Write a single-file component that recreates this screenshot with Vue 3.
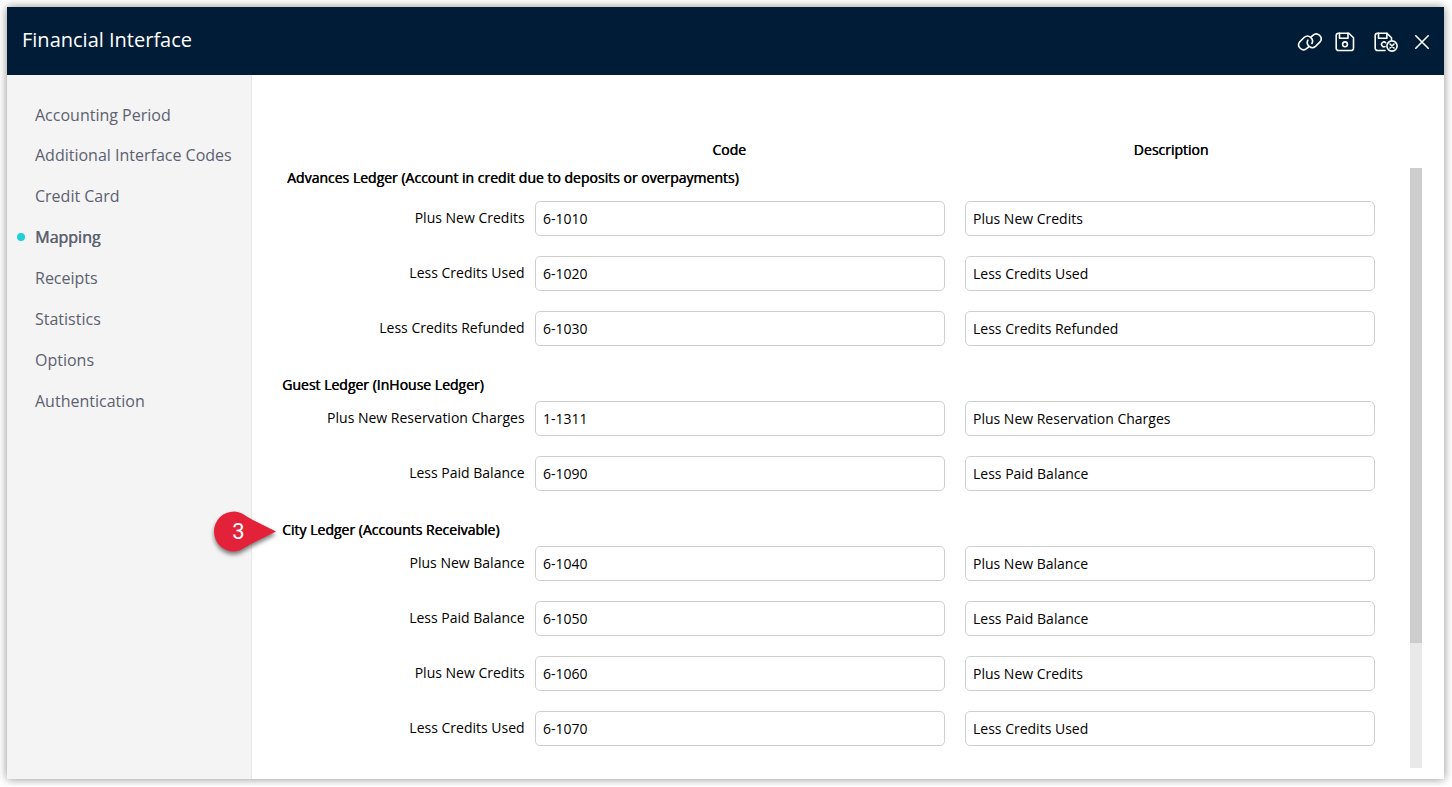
<script setup>
import { ref } from 'vue'

const menu = [
  'Accounting Period',
  'Additional Interface Codes',
  'Credit Card',
  'Mapping',
  'Receipts',
  'Statistics',
  'Options',
  'Authentication',
]

const active = ref('Mapping')

const ledgers = ref([
  {
    title: 'Advances Ledger (Account in credit due to deposits or overpayments)',
    rows: [
      { label: 'Plus New Credits', code: '6-1010', description: 'Plus New Credits' },
      { label: 'Less Credits Used', code: '6-1020', description: 'Less Credits Used' },
      { label: 'Less Credits Refunded', code: '6-1030', description: 'Less Credits Refunded' },
    ],
  },
  {
    title: 'Guest Ledger (InHouse Ledger)',
    rows: [
      {
        label: 'Plus New Reservation Charges',
        code: '1-1311',
        description: 'Plus New Reservation Charges',
      },
      { label: 'Less Paid Balance', code: '6-1090', description: 'Less Paid Balance' },
    ],
  },
  {
    title: 'City Ledger (Accounts Receivable)',
    step: 3,
    rows: [
      { label: 'Plus New Balance', code: '6-1040', description: 'Plus New Balance' },
      { label: 'Less Paid Balance', code: '6-1050', description: 'Less Paid Balance' },
      { label: 'Plus New Credits', code: '6-1060', description: 'Plus New Credits' },
      { label: 'Less Credits Used', code: '6-1070', description: 'Less Credits Used' },
    ],
  },
])
</script>

<template>
  <div class="dialog">
    <header class="titlebar">
      <h1>Financial Interface</h1>
      <div class="actions">
        <button class="link-btn" type="button" aria-label="Link">
          <svg width="26" height="20" viewBox="0 0 26 20">
            <path d="M11.6 14.8l-1.700 1.600a4.900 4.900 0 0 1-7.400-6.300l4.800-4.800a5 5 0 0 1 7.600 6.200" />
            <path d="M14.200 4.900l1.700-1.600a4.900 4.900 0 0 1 7.400 6.300l-4.800 4.800a5 5 0 0 1-7.600-6.200" />
          </svg>
        </button>
        <button class="save-btn" type="button" aria-label="Save">
          <svg width="20" height="20" viewBox="0 0 20 20">
            <path d="M3.500 1.200h10.400l4.600 4.600v10.400a2.300 2.300 0 0 1-2.300 2.300H3.500a2.300 2.300 0 0 1-2.300-2.300V3.500a2.300 2.300 0 0 1 2.300-2.300z" />
            <path d="M4.500 1.200v5h8.500v-5" />
            <circle cx="10" cy="12.300" r="2.400" />
          </svg>
        </button>
        <button class="save-close-btn" type="button" aria-label="Save and close">
          <svg width="25" height="20" viewBox="0 0 25 20">
            <path d="M11 18.500H3.500a2.300 2.300 0 0 1-2.300-2.300V3.500a2.300 2.300 0 0 1 2.300-2.300h9.400l4.600 4.600v1.800" />
            <path d="M4.500 1.200v5h8.400v-5" />
            <path d="M11.600 10.600a2.400 2.400 0 1 0-.6 3.900" />
            <circle cx="18" cy="14" r="5.100" />
            <path d="M16 12l4 4M20 12l-4 4" />
          </svg>
        </button>
        <button class="close-btn" type="button" aria-label="Close">
          <svg width="14" height="14" viewBox="0 0 14 14">
            <path d="M.8.8l12.4 12.400M13.200.8L.8 13.200" />
          </svg>
        </button>
      </div>
    </header>

    <div class="body">
      <nav class="sidebar">
        <a
          v-for="item in menu"
          :key="item"
          class="menu-item"
          :class="{ active: item === active }"
          @click="active = item"
        >
          {{ item }}
        </a>
      </nav>

      <main class="content">
        <div class="columns">
          <span class="column-title">Code</span>
          <span class="column-title">Description</span>
        </div>

        <div class="scroll-area">
          <div class="ledgers">
            <section v-for="ledger in ledgers" :key="ledger.title" class="ledger">
              <h2>
                {{ ledger.title }}
                <span v-if="ledger.step" class="marker">
                  <svg width="74" height="54" viewBox="0 0 74 54">
                    <path d="M69 25.500L45 37.500C38 41 33.500 45.500 27 45.500a20 20 0 0 1 0-40C33.500 5.500 38 9.800 45 13.500z" />
                  </svg>
                  <span class="marker-number">{{ ledger.step }}</span>
                </span>
              </h2>
              <div v-for="row in ledger.rows" :key="row.code" class="row">
                <label>{{ row.label }}</label>
                <input v-model="row.code" type="text" />
                <input v-model="row.description" type="text" />
              </div>
            </section>
          </div>
          <div class="scrollbar">
            <div class="thumb"></div>
          </div>
        </div>
      </main>
    </div>
  </div>
</template>

<style>
body {
  background: #fff;
  overflow: hidden;
}
</style>

<style scoped>
.dialog {
  width: 1437px;
  height: 772px;
  margin: 7px;
  display: flex;
  flex-direction: column;
  box-sizing: border-box;
  background: #fff;
  box-shadow: 0 0 9px rgba(0, 0, 0, 0.45);
  font-family: 'Open Sans', 'Noto Sans', sans-serif;
  font-size: 14px;
  color: #000;
}

.titlebar {
  height: 68px;
  flex: none;
  display: flex;
  align-items: center;
  justify-content: space-between;
  padding: 0 15.5px 0 15px;
  box-sizing: border-box;
  background: #001c36;
}

h1 {
  margin: 0 0 3px;
  color: #fff;
  font-size: 20px;
  font-weight: 400;
  line-height: 28px;
}

.actions {
  display: flex;
  align-items: center;
  padding-top: 1px;
}

.actions button {
  display: flex;
  padding: 0;
  border: 0;
  background: none;
  cursor: pointer;
}

.actions svg {
  fill: none;
  stroke: #fff;
  stroke-width: 1.6;
  stroke-linecap: round;
  stroke-linejoin: round;
}

.save-btn {
  margin-left: 12px;
}

.save-close-btn {
  margin-left: 19px;
}

.close-btn {
  margin-left: 16px;
}

.body {
  flex: 1;
  display: flex;
  min-height: 0;
}

.sidebar {
  width: 245px;
  flex: none;
  box-sizing: border-box;
  padding: 19.55px 0 0 28px;
  background: #f4f4f4;
  border-right: 1px solid #e9e9e9;
}

.menu-item {
  display: block;
  position: relative;
  height: 40.86px;
  line-height: 40px;
  font-size: 16px;
  color: #5c6170;
  cursor: pointer;
}

.menu-item.active {
  text-shadow: 0.5px 0 0 #5c6170;
}

.menu-item.active::before {
  content: '';
  position: absolute;
  left: -18px;
  top: 16px;
  width: 8px;
  height: 8px;
  border-radius: 50%;
  background: #1fcfd9;
}

.content {
  flex: 1;
  display: flex;
  flex-direction: column;
  padding: 65px 22px 11px 30px;
}

.columns {
  display: flex;
  gap: 32px;
  height: 28px;
  padding-left: 242px;
}

.column-title {
  width: 410px;
  line-height: 20px;
  text-align: center;
  text-shadow: 0.5px 0 0 #000;
}

.scroll-area {
  flex: 1;
  display: flex;
  justify-content: space-between;
}

.ledger + .ledger {
  margin-top: 29px;
}

h2 {
  position: relative;
  margin: 0 0 6px;
  font-size: 14px;
  font-weight: 400;
  line-height: 20px;
  text-shadow: 0.5px 0 0 #000;
}

.ledger:first-child h2 {
  margin: 0 0 13px 5px;
}

.row {
  display: flex;
}

.row + .row {
  margin-top: 20px;
}

label {
  width: 242.6px;
  margin-right: 10.4px;
  line-height: 34px;
  text-align: right;
}

.row input {
  width: 410px;
  height: 35px;
  padding: 0 7px;
  box-sizing: border-box;
  border: 1px solid #cfcfcf;
  border-radius: 5px;
  background: #fff;
  color: #000;
  font-family: inherit;
  font-size: 14px;
  outline: none;
}

.row input:last-child {
  margin-left: 20px;
}

.scrollbar {
  width: 12px;
  background: #e9e9e9;
}

.thumb {
  height: 475px;
  background: #cdcdcd;
}

.marker {
  position: absolute;
  left: -75px;
  top: -14.5px;
  width: 74px;
  height: 54px;
  text-shadow: none;
}

.marker svg {
  display: block;
  fill: #e32239;
  filter: drop-shadow(0 3px 2px rgba(0, 0, 0, 0.5));
}

.marker-number {
  position: absolute;
  left: 6px;
  top: 5px;
  width: 51px;
  color: #fff;
  font-family: Roboto, Arial, sans-serif;
  font-size: 22px;
  line-height: 41px;
  text-align: center;
}
</style>
